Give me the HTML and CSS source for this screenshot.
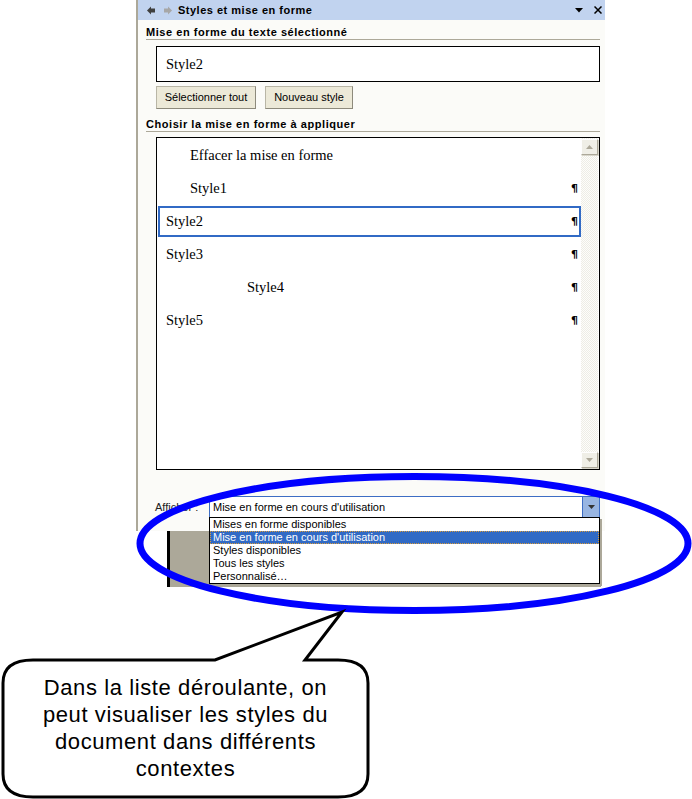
FILE: index.html
```html
<!DOCTYPE html>
<html lang="fr">
<head>
<meta charset="utf-8">
<title>Styles et mise en forme</title>
<link rel="stylesheet" href="styles.css">
</head>
<body>
<div class="stage">
  <div class="panel">
    <div class="titlebar">
      <svg class="nav" width="8" height="9" viewBox="0 0 8 9"><path d="M0 4.5 L4 0.5 L4 2.5 L8 2.5 L8 6.5 L4 6.5 L4 8.5 Z" fill="#3f3f3f"/></svg>
      <svg class="nav fwd" width="8" height="9" viewBox="0 0 8 9"><path d="M8 4.5 L4 0.5 L4 2.5 L0 2.5 L0 6.5 L4 6.5 L4 8.5 Z" fill="#a7a7a7"/></svg>
      <span class="title">Styles et mise en forme</span>
      <span class="tb-right">
        <svg class="tb-drop" width="8" height="5" viewBox="0 0 8 5"><path d="M0 0 H8 L4 4.5 Z" fill="#000"/></svg>
        <svg class="tb-close" width="8" height="8" viewBox="0 0 8 8"><path d="M0.5 0.5 L7.5 7.5 M7.5 0.5 L0.5 7.5" stroke="#000" stroke-width="1.5"/></svg>
      </span>
    </div>

    <div class="heading">Mise en forme du texte sélectionné</div>
    <div class="current">Style2</div>
    <div class="buttons">
      <div class="btn btn-all">Sélectionner tout</div>
      <div class="btn btn-new">Nouveau style</div>
    </div>

    <div class="heading heading-2">Choisir la mise en forme à appliquer</div>
    <div class="stylelist">
      <div class="rows">
        <div class="row"><div class="box indent1"><span>Effacer la mise en forme</span></div></div>
        <div class="row"><div class="box indent1"><span>Style1</span><span class="pil">¶</span></div></div>
        <div class="row"><div class="box selected"><span>Style2</span><span class="pil">¶</span></div></div>
        <div class="row"><div class="box"><span>Style3</span><span class="pil">¶</span></div></div>
        <div class="row"><div class="box indent2"><span>Style4</span><span class="pil">¶</span></div></div>
        <div class="row"><div class="box"><span>Style5</span><span class="pil">¶</span></div></div>
      </div>
      <div class="scrollbar">
        <div class="sb-btn"><svg width="7" height="4" viewBox="0 0 7 4"><path d="M0 4 H7 L3.5 0 Z" fill="#aca899"/></svg></div>
        <div class="sb-track"></div>
        <div class="sb-btn"><svg width="7" height="4" viewBox="0 0 7 4"><path d="M0 0 H7 L3.5 4 Z" fill="#aca899"/></svg></div>
      </div>
    </div>

    <div class="show-row">
      <span class="show-label">Afficher :</span>
      <div class="combo">
        <span class="combo-text">Mise en forme en cours d'utilisation</span>
        <span class="combo-btn"><svg width="7" height="4" viewBox="0 0 7 4"><path d="M0 0 H7 L3.5 4 Z" fill="#333"/></svg></span>
        <div class="combo-list">
          <div class="opt">Mises en forme disponibles</div>
          <div class="opt opt-sel">Mise en forme en cours d'utilisation</div>
          <div class="opt">Styles disponibles</div>
          <div class="opt">Tous les styles</div>
          <div class="opt">Personnalisé…</div>
        </div>
      </div>
    </div>
  </div>
  <div class="docarea"></div>

  <svg class="overlay" width="692" height="799" viewBox="0 0 692 799">
    <ellipse cx="414" cy="543.5" rx="274" ry="67" fill="none" stroke="#0000ff" stroke-width="7"/>
    <path d="M33 660 L215 660 L342 612 L305 660 L338 660 Q368 660 368 683 L368 774 Q368 797 338 797 L33 797 Q3 797 3 774 L3 683 Q3 660 33 660 Z" fill="#fff" stroke="#000" stroke-width="3" stroke-linejoin="miter"/>
  </svg>
  <div class="callout-text">Dans la liste déroulante, on<br>peut visualiser les styles du<br>document dans différents<br>contextes</div>
</div>
</body>
</html>
```

FILE: styles.css
```css
html, body {
  margin: 0;
  padding: 0;
  background: #ffffff;
}

.stage {
  position: relative;
  width: 692px;
  height: 799px;
  overflow: hidden;
  font-family: "Liberation Sans", Arial, sans-serif;
  font-size: 11px;
  color: #000;
}

.panel {
  margin-left: 136px;
  width: 467px;
  height: 531px;
  border-left: 2px solid #aca899;
  background: #fbfbf8;
  display: flex;
  flex-direction: column;
}

.titlebar {
  height: 20px;
  background: #c1d3ef;
  display: flex;
  align-items: center;
  padding-left: 9px;
}

.nav {
  display: block;
  margin-right: 9px;
}

.nav.fwd {
  margin-right: 6px;
}

.title {
  font-weight: bold;
  font-size: 11px;
  letter-spacing: 0.5px;
}

.tb-right {
  margin-left: auto;
  display: flex;
  align-items: center;
  padding-right: 3px;
}

.tb-drop {
  display: block;
  margin-right: 11px;
  margin-top: 1px;
}

.tb-close {
  display: block;
}

.heading {
  margin: 0 5px 0 8px;
  padding-top: 5px;
  line-height: 14px;
  font-weight: bold;
  letter-spacing: 0.55px;
  border-bottom: 1px solid #aca899;
}

.heading-2 {
  padding-top: 8px;
}

.current {
  margin: 6px 5px 0 18px;
  height: 34px;
  border: 1px solid #000;
  background: #fff;
  font-family: "Liberation Serif", "Times New Roman", serif;
  font-size: 14.5px;
  line-height: 34px;
  padding-left: 9px;
}

.buttons {
  display: flex;
  gap: 9px;
  margin: 4px 0 0 18px;
}

.btn {
  height: 21px;
  line-height: 21px;
  border: 1px solid #b9b6a6;
  border-right-color: #8d8a7c;
  border-bottom-color: #8d8a7c;
  background: #ece9d8;
  text-align: center;
  box-sizing: content-box;
}

.btn-all {
  width: 98px;
}

.btn-new {
  width: 86px;
}

.stylelist {
  margin: 5px 5px 0 18px;
  height: 331px;
  border: 1px solid #000;
  background: #fff;
  display: flex;
}

.rows {
  width: 424px;
  padding-top: 1px;
}

.row {
  height: 31px;
  padding: 1px 0 1px 1px;
}

.box {
  height: 27px;
  border: 2px solid transparent;
  display: flex;
  align-items: center;
  padding-left: 6px;
  font-family: "Liberation Serif", "Times New Roman", serif;
  font-size: 14.5px;
}

.box.selected {
  border-color: #316ac5;
}

.box.indent1 {
  padding-left: 30px;
}

.box.indent2 {
  padding-left: 87px;
}

.pil {
  margin-left: auto;
  margin-right: 1px;
  font-family: "DejaVu Sans", sans-serif;
  font-weight: bold;
  font-size: 11px;
  color: #000;
}

.scrollbar {
  width: 17px;
  display: flex;
  flex-direction: column;
  padding: 1px 0;
  background: repeating-conic-gradient(#eeede5 0 25%, #fdfdfb 0 50%) 0 0 / 2px 2px;
}

.sb-btn {
  height: 14px;
  border: 1px solid;
  border-color: #fefefe #aca899 #aca899 #fefefe;
  box-shadow: 1px 1px 0 #d8d6cb;
  background: #efeee6;
  display: flex;
  align-items: center;
  justify-content: center;
}

.sb-btn svg {
  display: block;
}

.sb-track {
  flex: 1;
}

.show-row {
  display: flex;
  align-items: center;
  margin-top: 26px;
  padding-left: 17px;
}

.show-label {
  width: 54px;
  color: #222;
}

.combo {
  position: relative;
  width: 389px;
  height: 20px;
  border: 1px solid #3d6dc4;
  background: #fff;
  display: flex;
  align-items: center;
}

.combo-text {
  padding-left: 3px;
}

.combo-btn {
  margin-left: auto;
  width: 16px;
  height: 20px;
  background: #98b5e2;
  border-left: 1px solid #3d6dc4;
  display: flex;
  align-items: center;
  justify-content: center;
}

.combo-btn svg {
  display: block;
}

.combo-list {
  position: absolute;
  left: -1px;
  top: 20px;
  width: 389px;
  height: 65px;
  border: 1px solid #000;
  background: #fff;
  box-shadow: 2px 2px 0 #aca899;
  z-index: 2;
}

.opt {
  height: 13px;
  line-height: 13px;
  padding-left: 3px;
  white-space: nowrap;
}

.opt-sel {
  background: #316ac5;
  color: #fff;
  outline: 1px dotted #d99a3a;
  outline-offset: -1px;
}

.docarea {
  margin-left: 167px;
  width: 431px;
  height: 56px;
  border-left: 3px solid #000;
  background: #aca899;
}

.overlay {
  position: absolute;
  left: 0;
  top: 0;
  pointer-events: none;
  z-index: 5;
}

.callout-text {
  position: absolute;
  left: 3px;
  top: 674px;
  width: 365px;
  text-align: center;
  font-family: "Liberation Sans", Arial, sans-serif;
  font-size: 22px;
  letter-spacing: 0.6px;
  line-height: 27px;
  z-index: 6;
}
```
